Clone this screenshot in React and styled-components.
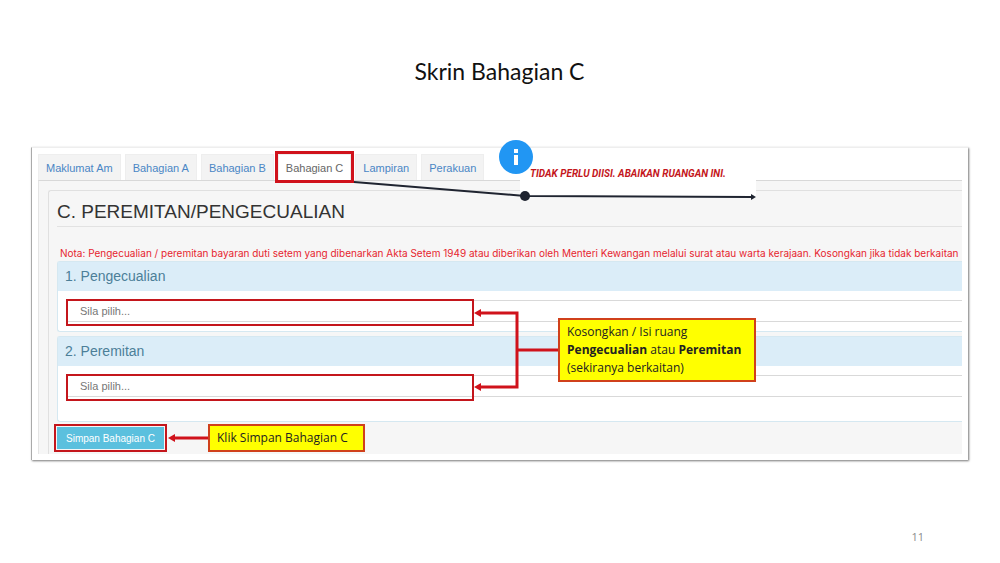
import { useState } from "react";
import styled, { createGlobalStyle } from "styled-components";

const tabs = [
  "Maklumat Am",
  "Bahagian A",
  "Bahagian B",
  "Bahagian C",
  "Lampiran",
  "Perakuan",
];

export default function App() {
  const [activeTab, setActiveTab] = useState("Bahagian C");

  return (
    <>
      <GlobalStyle />
      <Slide>
        <Title>Skrin Bahagian C</Title>
        <Frame>
          <Tabs>
            {tabs.map((tab) => (
              <Tab
                key={tab}
                type="button"
                $active={tab === activeTab}
                onClick={() => setActiveTab(tab)}
              >
                {tab}
              </Tab>
            ))}
          </Tabs>
          <TabContent>
            <Section>
              <SectionTitle>C. PEREMITAN/PENGECUALIAN</SectionTitle>
              <Note>
                Nota: Pengecualian / peremitan bayaran duti setem yang dibenarkan
                Akta Setem 1949 atau diberikan oleh Menteri Kewangan melalui
                surat atau warta kerajaan. Kosongkan jika tidak berkaitan
              </Note>
              <Field id="pengecualian" label="1. Pengecualian" />
              <Field id="peremitan" label="2. Peremitan" $tall />
              <SaveButton type="button">Simpan Bahagian C</SaveButton>
            </Section>
          </TabContent>
          <Annotations />
        </Frame>
        <PageNumber>11</PageNumber>
      </Slide>
    </>
  );
}

function Field({ id, label, $tall }) {
  return (
    <Panel>
      <PanelHeading htmlFor={id}>{label}</PanelHeading>
      <PanelBody $tall={$tall}>
        <Select id={id} defaultValue="">
          <option value="">Sila pilih...</option>
        </Select>
        <Highlight />
      </PanelBody>
    </Panel>
  );
}

function Annotations() {
  return (
    <>
      <Remark>TIDAK PERLU DIISI. ABAIKAN RUANGAN INI.</Remark>
      <Connectors width="740" height="314" viewBox="0 0 740 314" aria-hidden="true">
        <g stroke="#1f2430" strokeWidth="2" fill="none">
          <path d="M322 34 L493 48 L719 49" />
        </g>
        <circle cx="493" cy="48" r="5" fill="#1f2430" />
        <path d="M719 46 L724 49 L719 52 Z" fill="#1f2430" />
        <circle cx="484" cy="9" r="17" fill="#2196f3" />
        <rect x="482" y="1" width="4" height="4" fill="#fff" />
        <rect x="482" y="7" width="4" height="10" fill="#fff" />
        <g stroke="#d0121b" strokeWidth="3" fill="none">
          <path d="M448 165 H485 V239 H448" />
          <path d="M485 202 H527" />
          <path d="M141 290 H178" />
        </g>
        <g fill="#d0121b">
          <path d="M442 165 L449 161 V169 Z" />
          <path d="M442 239 L449 235 V243 Z" />
          <path d="M136 290 L143 286 V294 Z" />
        </g>
      </Connectors>
      <FieldCallout>
        Kosongkan / Isi ruang
        <br />
        <b>Pengecualian</b> atau <b>Peremitan</b>
        <br />
        (sekiranya berkaitan)
      </FieldCallout>
      <SaveCallout>Klik Simpan Bahagian C</SaveCallout>
    </>
  );
}

const GlobalStyle = createGlobalStyle`
  * {
    box-sizing: border-box;
  }
  body {
    margin: 0;
    background: #fff;
    font-family: "Liberation Sans", Arial, sans-serif;
    font-size: 11px;
  }
  button,
  select {
    font: inherit;
  }
`;

const Slide = styled.main`
  display: flex;
  flex-direction: column;
  padding: 57px 32px 16px 31px;
`;

const Title = styled.h1`
  margin: 0 0 62px;
  font-family: Lato, sans-serif;
  font-size: 23px;
  font-weight: 400;
  line-height: 28px;
  text-align: center;
  color: #111;
`;

const Frame = styled.section`
  position: relative;
  padding: 6px;
  background: #fff;
  border-left: 1px solid #aaa;
  border-top: 1px solid #eee;
  box-shadow: 1px 1px 2px 0 #777;
`;

const Tabs = styled.nav`
  display: flex;
  gap: 4px;
  height: 26px;
`;

const Tab = styled.button`
  padding: 0 7px;
  border: 1px solid #eee;
  border-bottom: 0;
  background: ${(props) => (props.$active ? "#fff" : "#f3f3f3")};
  color: ${(props) => (props.$active ? "#666" : "#4a86c5")};
  outline: ${(props) => (props.$active ? "3px solid #d0121b" : "none")};
  white-space: nowrap;
  cursor: pointer;
`;

const TabContent = styled.div`
  padding: 9px 0 0 9px;
  border-top: 1px solid #d8d8d8;
  border-left: 1px solid #e4e4e4;
  background: #f6f6f6;
`;

const Section = styled.div`
  padding: 9px 0 5px 8px;
  border-top: 1px solid #e0e0e0;
  border-left: 1px solid #e0e0e0;
  border-top-left-radius: 3px;
`;

const SectionTitle = styled.h2`
  margin: 0 0 18px;
  padding-bottom: 2px;
  border-bottom: 1px solid #e2e2e2;
  font-size: 19px;
  font-weight: 400;
  line-height: 24px;
  color: #333;
`;

const Note = styled.p`
  margin: 0;
  padding-left: 3px;
  font-family: Inter, sans-serif;
  font-size: 10px;
  line-height: 16px;
  white-space: nowrap;
  color: #e6252f;
`;

const Panel = styled.div`
  margin-bottom: 4px;
  border: 1px solid #d5e8f1;
  border-right: 0;
  border-radius: 3px 0 0 3px;
  background: #fff;
`;

const PanelHeading = styled.label`
  display: block;
  padding-left: 7px;
  background: #dbedf8;
  font-size: 14px;
  line-height: 29px;
  color: #4c7f98;
`;

const PanelBody = styled.div`
  position: relative;
  padding: 9px 0 ${(props) => (props.$tall ? 24 : 9)}px 9px;
`;

const Select = styled.select`
  display: block;
  width: 100%;
  height: 22px;
  padding: 0 12px;
  border: 1px solid #d9d9d9;
  border-right: 0;
  border-radius: 0;
  background: #fff;
  appearance: none;
  color: #777;
`;

const Highlight = styled.div`
  position: absolute;
  top: 8px;
  left: 8px;
  width: 408px;
  height: 27px;
  border: 2px solid #c4161c;
  pointer-events: none;
`;

const SaveButton = styled.button`
  display: block;
  height: 22px;
  margin-top: 5px;
  padding: 0 9px;
  border: 0;
  background: #5bc0de;
  outline: 2px solid #c4161c;
  outline-offset: 1px;
  font-size: 10px;
  color: #fff;
  cursor: pointer;
`;

const Remark = styled.p`
  position: absolute;
  top: 16px;
  left: 488px;
  width: 236px;
  height: 34px;
  margin: 0;
  padding-left: 10px;
  background: #fff;
  font-family: Roboto, sans-serif;
  font-size: 10px;
  font-style: italic;
  font-weight: 700;
  line-height: 20px;
  white-space: nowrap;
  color: #c4161c;
`;

const Connectors = styled.svg`
  position: absolute;
  top: 0;
  left: 0;
  overflow: visible;
  pointer-events: none;
`;

const Callout = styled.div`
  position: absolute;
  padding: 3px 7px;
  border: 2px solid #d0401b;
  background: #ff0;
  font-family: "Open Sans", sans-serif;
  font-size: 12px;
  line-height: 18px;
  white-space: nowrap;
  color: #222;
`;

const FieldCallout = styled(Callout)`
  top: 170px;
  left: 526px;
  width: 198px;
`;

const SaveCallout = styled(Callout)`
  top: 276px;
  left: 176px;
  width: 157px;
`;

const PageNumber = styled.footer`
  align-self: flex-end;
  margin: 68px 44px 0 0;
  font-family: "Open Sans", sans-serif;
  font-size: 11px;
  line-height: 18px;
  color: #8b8b8b;
`;
